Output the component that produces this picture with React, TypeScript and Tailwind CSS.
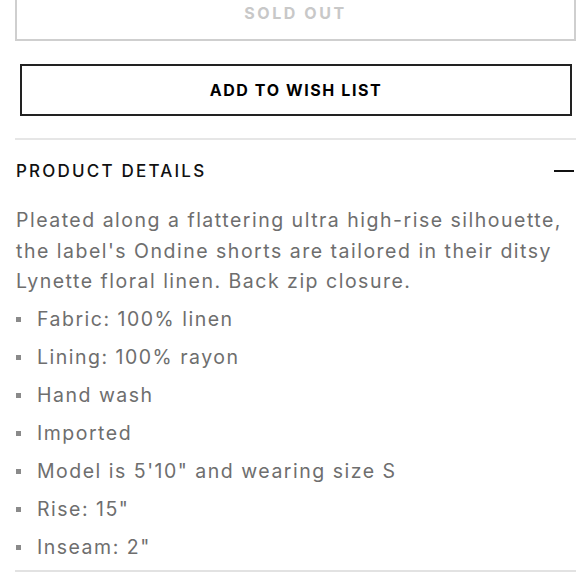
const details = [
  'Fabric: 100% linen',
  'Lining: 100% rayon',
  'Hand wash',
  'Imported',
  'Model is 5\'10" and wearing size S',
  'Rise: 15"',
  'Inseam: 2"',
];

export default function App() {
  return (
    <div
      className="relative h-[580px] w-[580px] overflow-hidden bg-white px-[15px]"
      style={{ fontFamily: 'Inter, "Liberation Sans", sans-serif' }}
    >
      <button
        disabled
        className="-mt-[15px] flex h-[56px] w-[561px] items-center justify-center border-2 border-[#cfcfcf] text-[16px] font-bold tracking-[2.6px] text-[#c8c8c8]"
      >
        SOLD OUT
      </button>

      <button className="mt-[23px] ml-[5px] flex h-[52px] w-[552px] items-center justify-center border-2 border-[#222] text-[16px] font-bold tracking-[1.6px] text-black">
        ADD TO WISH LIST
      </button>

      <div className="mt-[22px] h-[2px] w-[561px] bg-[#e6e6e6]" />

      <div className="mt-[19px] flex h-[24px] w-[559px] items-center justify-between pl-[1px]">
        <h3 className="text-[17px] leading-[24px] font-medium tracking-[2.2px] text-[#111]">
          PRODUCT DETAILS
        </h3>
        <span className="h-[2px] w-[20px] bg-[#111]" />
      </div>

      <p className="mt-[22px] pl-[1px] text-[19.5px] leading-[30.5px] tracking-[1.5px] text-[#6e6e6e]">
        Pleated along a flattering ultra high-rise silhouette, the label's Ondine shorts are tailored in their ditsy Lynette floral linen. Back zip closure.
      </p>

      <ul className="mt-[4px] pl-[1px]">
        {details.map((item) => (
          <li
            key={item}
            className="flex h-[38px] items-center text-[19.5px] tracking-[1.5px] text-[#6e6e6e]"
          >
            <span className="mr-[16px] h-[5px] w-[5px] shrink-0 bg-[#8a8a8a]" />
            {item}
          </li>
        ))}
      </ul>

      <div className="mt-[3px] h-[2px] w-[561px] bg-[#e2e2e2]" />
    </div>
  );
}
